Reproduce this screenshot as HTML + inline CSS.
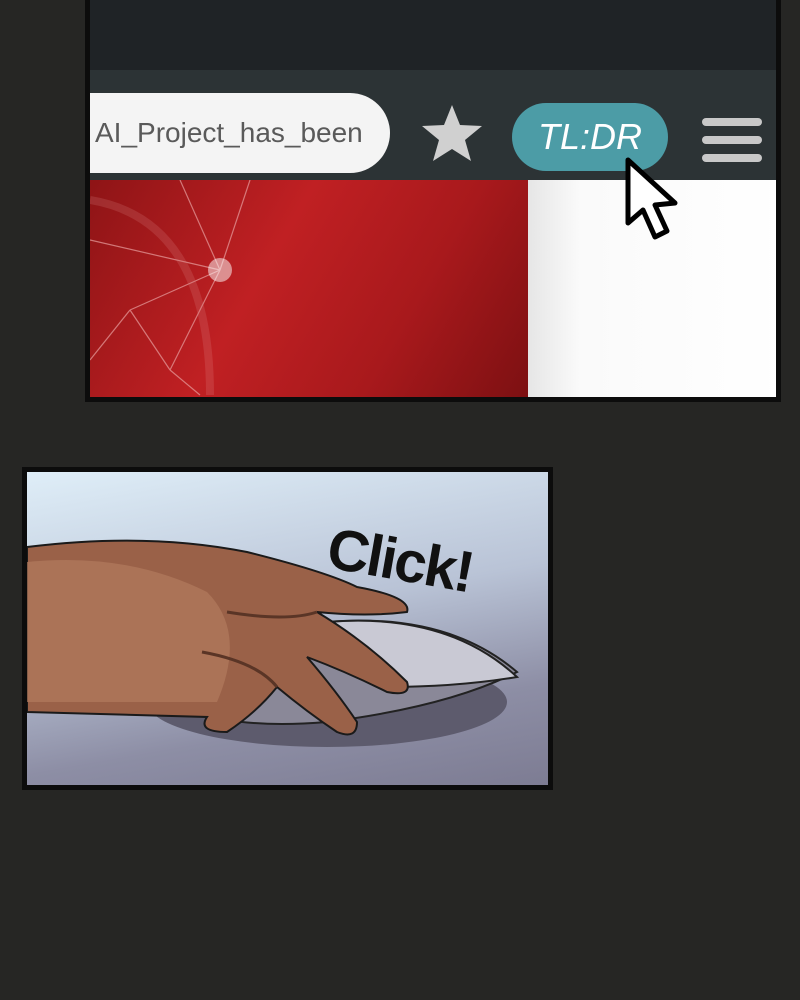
<!DOCTYPE html>
<html><head><meta charset="utf-8"><style>
html,body{margin:0;padding:0;background:#262624;width:800px;height:1000px;overflow:hidden}
.p1{position:absolute;left:85px;top:-5px;width:686px;height:397px;border:5px solid #0c0c0c;background:#1f2326;overflow:hidden}
.p2{position:absolute;left:22px;top:467px;width:521px;height:313px;border:5px solid #0c0c0c;overflow:hidden;background:linear-gradient(170deg,#dfeef8 0%,#b9c3d6 45%,#8d8ea5 75%,#7d7c93 100%)}
</style></head><body>
<div class="p1">
 <div style="position:absolute;left:0;top:70px;width:686px;height:115px;background:#2c3335"></div>
 <div style="position:absolute;left:0;top:180px;width:438px;height:220px;background:linear-gradient(120deg,#8e1416 0%,#c02023 40%,#a8191c 70%,#7c1012 100%)"></div>
 <div style="position:absolute;left:438px;top:180px;width:260px;height:220px;background:linear-gradient(90deg,#e6e6e6,#fafafa 20%,#fff)"></div>
 <svg style="position:absolute;left:0;top:180px" width="440" height="220">
  <g stroke="#e8a0a0" stroke-width="1.2" fill="none" opacity=".7">
   <line x1="130" y1="90" x2="40" y2="130"/><line x1="130" y1="90" x2="90" y2="0"/><line x1="130" y1="90" x2="160" y2="0"/><line x1="130" y1="90" x2="0" y2="60"/><line x1="130" y1="90" x2="80" y2="190"/><line x1="40" y1="130" x2="0" y2="180"/><line x1="40" y1="130" x2="80" y2="190"/><line x1="80" y1="190" x2="110" y2="215"/>
   <path d="M0 20 Q120 40 120 215" stroke-width="8" opacity=".25"/>
  </g>
  <circle cx="130" cy="90" r="12" fill="#fff" opacity=".5"/>
 </svg>
 <div style="position:absolute;left:0;top:93px;width:300px;height:80px;background:#f4f4f4;border-radius:0 40px 40px 0;font:28px 'Liberation Sans',sans-serif;color:#5a5a5a;line-height:80px;padding-left:5px;box-sizing:border-box">AI_Project_has_been</div>
 <svg style="position:absolute;left:330px;top:103px" width="64" height="60" viewBox="0 0 64 60"><polygon points="32,2 40,22 62,23 45,37 51,58 32,46 13,58 19,37 2,23 24,22" fill="#d0d0d0"/></svg>
 <div style="position:absolute;left:422px;top:103px;width:156px;height:68px;background:#4c9ca6;border-radius:34px;font:italic 36px 'Liberation Sans',sans-serif;color:#fff;text-align:center;line-height:68px">TL:DR</div>
 <div style="position:absolute;left:612px;top:118px;width:60px;height:8px;background:#c8c8c8;border-radius:4px"></div>
 <div style="position:absolute;left:612px;top:136px;width:60px;height:8px;background:#c8c8c8;border-radius:4px"></div>
 <div style="position:absolute;left:612px;top:154px;width:60px;height:8px;background:#c8c8c8;border-radius:4px"></div>
 <svg style="position:absolute;left:533px;top:155px" width="70" height="95"><path d="M5 5 L5 68 L20 55 L32 82 L44 76 L32 50 L52 48 Z" fill="#fff" stroke="#000" stroke-width="5" stroke-linejoin="round"/></svg>
</div>
<div class="p2">
 <svg width="521" height="313" style="position:absolute;left:0;top:0">
  <ellipse cx="300" cy="230" rx="180" ry="45" fill="#5d5b6d"/>
  <path d="M130 220 Q150 160 300 150 Q420 140 490 200 Q420 235 300 250 Q180 260 130 220Z" fill="#8a8898" stroke="#222" stroke-width="2"/>
  <path d="M300 150 Q420 140 490 205 Q430 215 360 215Z" fill="#c9c9d4" stroke="#222" stroke-width="2"/>
  <path d="M0 75 Q120 60 220 80 Q300 100 330 115 Q385 125 380 140 Q340 145 290 140 Q340 170 380 210 Q385 225 360 220 Q320 200 280 185 Q310 220 330 250 Q330 268 310 260 Q280 240 250 215 Q230 240 200 260 Q170 260 180 245 L0 240Z" fill="#9a6148" stroke="#1a1a1a" stroke-width="2"/>
  <path d="M0 90 Q100 80 180 120 Q220 160 190 230 L0 230Z" fill="#b27a5e" opacity=".7"/>
  <path d="M175 180 Q230 190 250 215 M200 140 Q260 150 290 140" stroke="#5a3526" stroke-width="3" fill="none"/>
 </svg>
 <div style="position:absolute;left:300px;top:55px;font:bold 58px 'Liberation Sans',sans-serif;color:#111;transform:rotate(10deg);letter-spacing:-2px">Click!</div>
</div>
</body></html>
